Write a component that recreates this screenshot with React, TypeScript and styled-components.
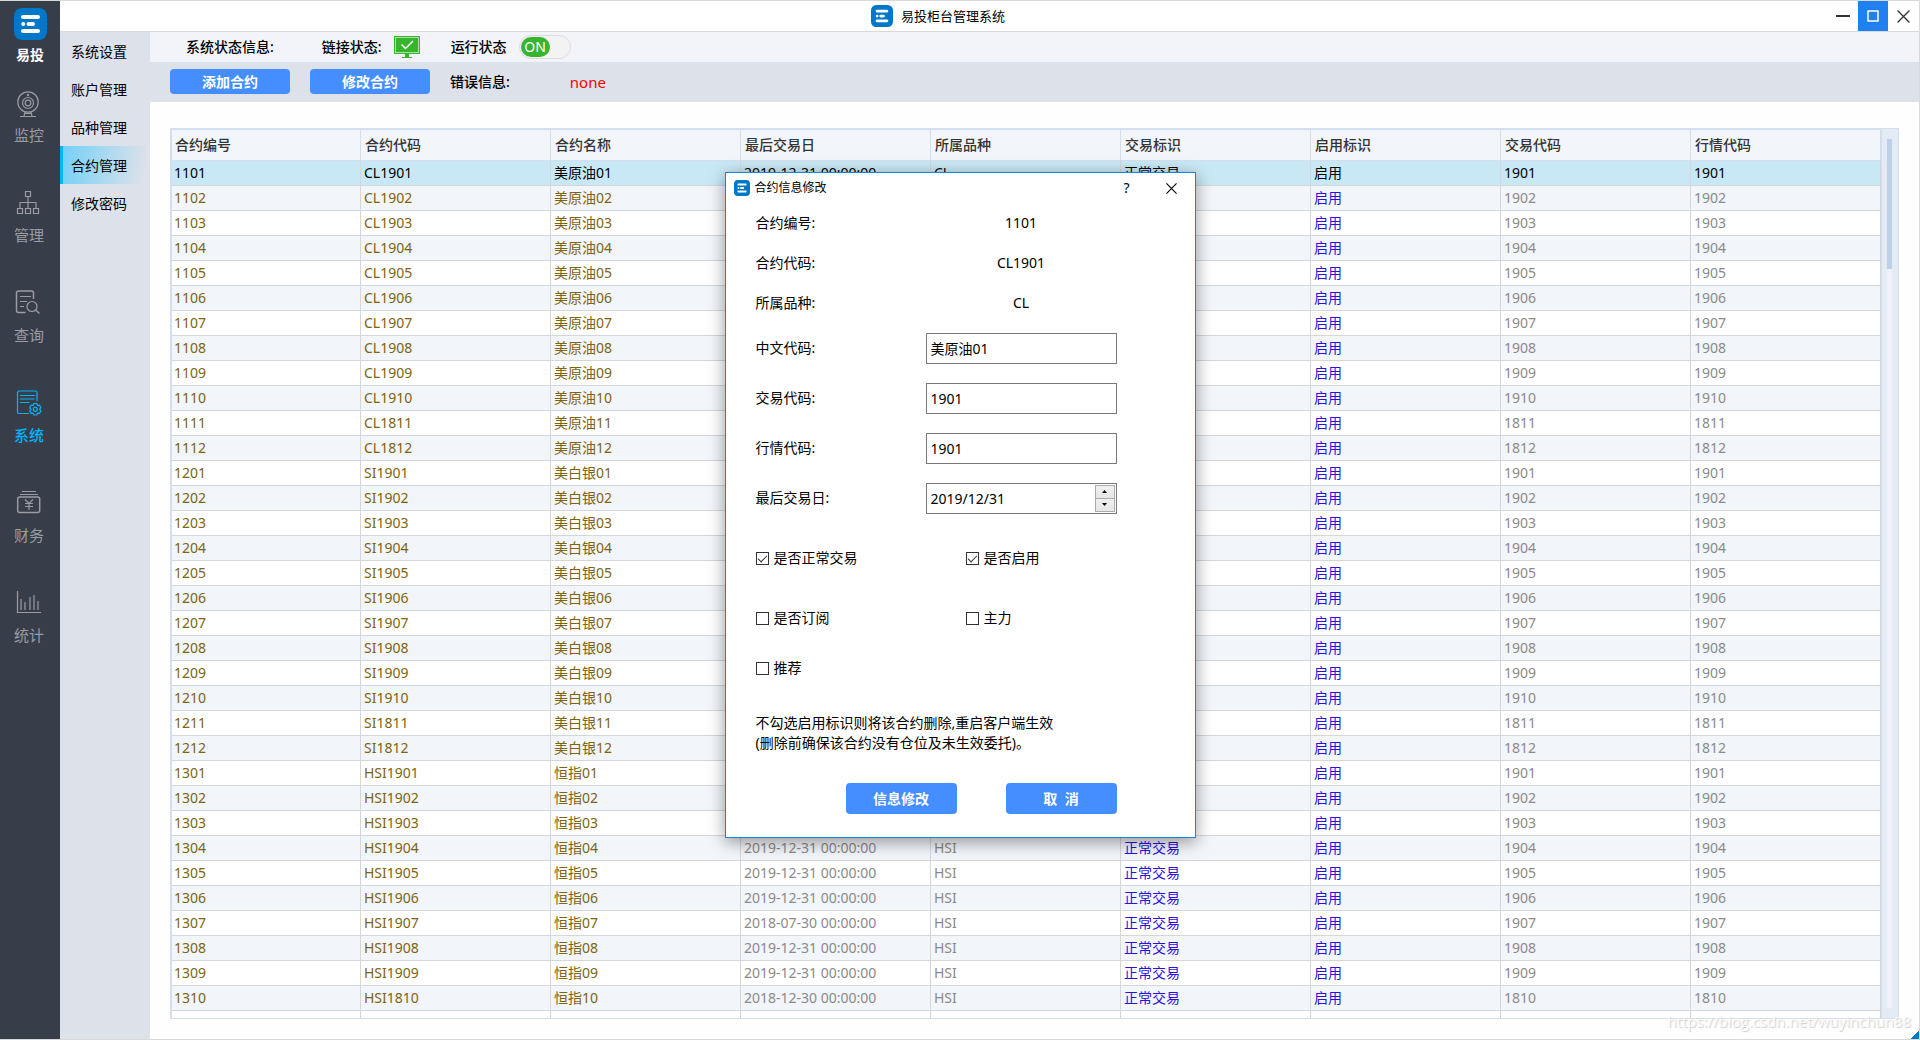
import React, { useState } from "react";
import styled, { createGlobalStyle, css } from "styled-components";

const GlobalStyle = createGlobalStyle`
  * { box-sizing: border-box; }
  body {
    margin: 0;
    background: #fefefe;
    color: #000;
    font: 14px/20px "Noto Sans", "Noto Sans CJK SC", sans-serif;
  }
  button, input { font: inherit; color: inherit; }
  button { padding: 0; border: 0; background: none; cursor: pointer; }
`;

/* ---------- window ---------- */

const Window = styled.div`
  position: relative;
  display: flex;
  height: 100vh;
  border: 1px solid #d9d9d9;
  border-left: 0;
  overflow: hidden;
`;

const Main = styled.div`
  display: flex;
  flex: 1;
  flex-direction: column;
  min-width: 0;
`;

const TitleBar = styled.header`
  display: flex;
  flex: none;
  height: 31px;
  padding-right: 1px;
  border-bottom: 1px solid #d9d9d9;
  background: #fff;
`;

const Title = styled.h1`
  display: flex;
  flex: 1;
  align-items: center;
  justify-content: center;
  gap: 8px;
  margin: 0;
  padding-right: 12px;
  font-size: 13px;
  font-weight: 400;
`;

const WindowButton = styled.button<{ $active?: boolean }>`
  display: flex;
  align-items: center;
  justify-content: center;
  width: 30px;
  color: ${(p) => (p.$active ? "#fff" : "#333")};
  background: ${(p) => (p.$active ? "#2080f0" : "transparent")};
`;

const ResizeGrip = styled.div`
  position: absolute;
  right: 0;
  bottom: 0;
  width: 9px;
  height: 9px;
  background: linear-gradient(135deg, transparent 50%, #0078c8 50%);
`;

const Watermark = styled.div`
  position: absolute;
  right: 8px;
  bottom: 8px;
  color: #fafafa;
  font: 15px/20px "Open Sans", sans-serif;
  text-shadow: 1px 1px 1px #ccc;
`;

/* ---------- navigation ---------- */

const Rail = styled.nav`
  display: flex;
  flex: none;
  flex-direction: column;
  width: 60px;
  background: #383d4a;
`;

const Brand = styled.div`
  display: flex;
  flex-direction: column;
  align-items: center;
  gap: 5px;
  height: 81px;
  padding-top: 7px;
  color: #fff;
  font-weight: 700;
`;

const RailButton = styled.button<{ $active?: boolean }>`
  display: flex;
  flex: none;
  flex-direction: column;
  align-items: center;
  gap: 7px;
  height: 100px;
  padding: 8px 2px 0 0;
  color: ${(p) => (p.$active ? "#00b4ff" : "#9a9ca2")};
  font-size: 15px;
  font-weight: ${(p) => (p.$active ? 500 : 400)};
`;

const Body = styled.div`
  display: flex;
  flex: 1;
  min-height: 0;
`;

const SubNav = styled.nav`
  flex: none;
  width: 90px;
  background: #dde1ea;
`;

const SubNavButton = styled.button<{ $active?: boolean }>`
  display: block;
  width: 100%;
  height: 38px;
  padding: 2px 0 0 8px;
  border-left: 3px solid transparent;
  text-align: left;
  ${(p) =>
    p.$active &&
    css`
      border-left-color: #00b7ff;
      background: linear-gradient(100deg, #74d0f7, #dde1ea 92%);
    `}
`;

/* ---------- status and tools ---------- */

const Content = styled.main`
  display: flex;
  flex: 1;
  flex-direction: column;
  min-width: 0;
`;

const StatusBar = styled.div`
  display: flex;
  flex: none;
  align-items: center;
  gap: 12px;
  height: 30px;
  padding-left: 36px;
  background: #f2f4f9;
`;

const StatusLabel = styled.span<{ $gap?: number }>`
  margin-right: ${(p) => p.$gap ?? 0}px;
  font-weight: 500;
`;

const LinkState = styled.span`
  display: flex;
  margin-right: 19px;
`;

const Toggle = styled.button`
  display: flex;
  width: 52px;
  height: 24px;
  padding: 1px;
  border: 1px solid #ddd;
  border-radius: 12px;
  background: #f3f3f3;
`;

const ToggleKnob = styled.span`
  width: 29px;
  height: 20px;
  border-radius: 10px;
  color: #fff;
  background: #37b52f;
  text-align: center;
`;

const ToolBar = styled.div`
  display: flex;
  flex: none;
  align-items: center;
  gap: 20px;
  height: 40px;
  padding: 0 0 1px 20px;
  background: #dde1ea;
`;

const PrimaryButton = styled.button<{ $size?: "small" | "large" }>`
  width: ${(p) => (p.$size === "large" ? 111 : 120)}px;
  height: ${(p) => (p.$size === "large" ? 31 : 25)}px;
  border-radius: 4px;
  color: #fff;
  background: #458eff;
  font-weight: 700;
  white-space: pre;
`;

const ErrorText = styled.output`
  color: #f00;
  font-size: 15px;
`;

/* ---------- table ---------- */

const TableFrame = styled.section`
  display: flex;
  flex: 1;
  min-height: 0;
  margin: 26px 20px 20px;
  border: 1px solid #d3dfee;
`;

const TableClip = styled.div`
  flex: 1;
  min-width: 0;
  overflow: hidden;
`;

const Table = styled.table`
  width: 100%;
  table-layout: fixed;
  border-spacing: 0;
  border-collapse: separate;
  white-space: nowrap;
`;

const HeadCell = styled.th`
  height: 32px;
  padding: 0 4px;
  border: solid #d3dfee;
  border-width: 1px 1px 1px 0;
  color: #333;
  background: #f2f5fa;
  font-weight: 500;
  text-align: left;
  &:first-child {
    padding-left: 3px;
    border-left-width: 1px;
  }
`;

type Tone = "olive" | "gray" | "blue";
const tones: Record<Tone, string> = { olive: "#7d6410", gray: "#8a8a8a", blue: "#2b10e0" };

const Row = styled.tr<{ $selected?: boolean }>`
  background: ${(p) => (p.$selected ? "#c9e8f5" : "#fff")};
  &:nth-child(even) { background: #f2f5fa; }
  ${(p) => p.$selected && css`td { color: #000; }`}
`;

const Cell = styled.td<{ $tone: Tone }>`
  height: 25px;
  padding: 0 3px;
  border: solid #d5d6d8;
  border-width: 0 1px 1px 0;
  color: ${(p) => tones[p.$tone]};
  &:first-child {
    padding-left: 2px;
    border-left: 1px solid #d3dfee;
  }
`;

const ScrollTrack = styled.div`
  flex: none;
  width: 17px;
  padding: 10px 6px 10px 5px;
  border-left: 1px solid #d3dfee;
  background: #e4ebf4;
`;

const ScrollGroove = styled.div`
  height: 100%;
  background: #eff3f8;
`;

const ScrollThumb = styled.div`
  height: 15%;
  background: #bed0e6;
`;

/* ---------- dialog ---------- */

const Dialog = styled.section`
  position: absolute;
  top: 171px;
  left: calc(50% - 235px);
  width: 471px;
  border: 1px solid #1883d7;
  background: #fff;
  box-shadow: 0 4px 16px rgba(0, 0, 0, 0.4);
`;

const DialogBar = styled.header`
  display: flex;
  align-items: center;
  height: 30px;
  padding: 0 8px;
`;

const DialogTitle = styled.h2`
  flex: 1;
  margin: 0 0 0 5px;
  font-size: 12px;
  font-weight: 400;
`;

const DialogBarButton = styled.button`
  display: flex;
  align-items: center;
  justify-content: center;
  width: 30px;
  height: 28px;
  &:last-child { margin-left: 15px; }
`;

const Form = styled.form`
  padding: 0 78px 23px 30px;
`;

const Field = styled.div<{ $tall?: boolean }>`
  display: flex;
  align-items: center;
  height: ${(p) => (p.$tall ? 50 : 40)}px;
`;

const FieldLabel = styled.label`
  flex: 1;
`;

const FieldValue = styled.output`
  width: 191px;
  text-align: center;
`;

const InputBox = styled.div`
  display: flex;
  width: 191px;
  height: 31px;
  padding: 1px;
  border: 1px solid #7a7a7a;
  background: #fff;
`;

const TextInput = styled.input`
  flex: 1;
  min-width: 0;
  padding: 1px 2px 0 3px;
  border: 0;
  outline: 0;
  background: none;
`;

const Spinner = styled.div`
  display: flex;
  flex-direction: column;
  width: 20px;
`;

const SpinButton = styled.button`
  display: flex;
  flex: 1;
  align-items: center;
  justify-content: center;
  border: 1px solid #acacac;
  background: linear-gradient(#f0f0f0, #e6e6e6);
  & + & { border-top: 0; }
`;

const Checks = styled.div`
  display: grid;
  grid-template: 60px 60px 40px / 210px 1fr;
  align-items: center;
  margin-top: 5px;
`;

const CheckLabel = styled.label`
  display: flex;
  align-items: center;
  gap: 5px;
`;

const CheckBox = styled.input`
  appearance: none;
  width: 13px;
  height: 13px;
  margin: 0;
  border: 1px solid #333;
  background: #fff;
  &:checked::after {
    content: "";
    display: block;
    width: 8px;
    height: 4px;
    margin: 2px 0 0 1px;
    border: solid #333;
    border-width: 0 0 1px 1px;
    transform: rotate(-45deg);
  }
`;

const Note = styled.p`
  margin: 25px 0 30px;
`;

const Actions = styled.div`
  display: flex;
  justify-content: flex-end;
  gap: 49px;
`;

/* ---------- drawings ---------- */

const Logo = ({ width, height }: { width: number; height: number }) => (
  <svg width={width} height={height} viewBox="0 0 33 32" preserveAspectRatio="none" aria-hidden="true">
    <rect width="33" height="32" rx="8" fill="#0077c8" />
    <g stroke="#fff" strokeWidth="4" strokeLinecap="round">
      <path d="M9 9h15M14.500 16h4.500M9 23h15M9.200 16h.1" />
    </g>
  </svg>
);

const Icon = ({ children }: { children: React.ReactNode }) => (
  <svg width="28" height="28" viewBox="0 0 28 28" fill="none" stroke="currentColor" strokeWidth="1.200" aria-hidden="true">
    {children}
  </svg>
);

const icons: Record<string, React.ReactNode> = {
  监控: (
    <Icon>
      <circle cx="13" cy="12" r="10.200" />
      <circle cx="13" cy="13" r="5.500" />
      <circle cx="13" cy="13" r="2.800" />
      <circle cx="13" cy="5" r=".6" />
      <path d="M10 22l-1 4M16 22l1 4M5 26.500h16M9 23.500h8" />
    </Icon>
  ),
  管理: (
    <Icon>
      <path d="M10.500 1.500h5v5h-5zM2.500 18.500h5v5h-5zM10.500 18.500h5v5h-5zM18.500 18.500h5v5h-5zM13 6.500v12M5 18.500v-6h16v6" />
    </Icon>
  ),
  查询: (
    <Icon>
      <path d="M10.500 22.500H3.500a2 2 0 0 1-2-2V3a2 2 0 0 1 2-2h13a2 2 0 0 1 2 2v6" strokeWidth="1.500" />
      <path d="M5 6.500h11M5 11.500h7M5 16.500h4" />
      <circle cx="17" cy="16.500" r="5" />
      <path d="M20.500 20l4 3.500" strokeWidth="1.500" />
    </Icon>
  ),
  系统: (
    <Icon>
      <path d="M14 23.500H4a1.500 1.500 0 0 1-1.500-1.500V2.500A1.500 1.500 0 0 1 4 1h16.500A1.500 1.500 0 0 1 22 2.500V11M5 5.500h14.500M5 9h14.500M5 12.500h9.500" />
      <path d="M18.800 13.500h3l.7 2 2-.3 1.400 2.500-1.300 1.600 1.300 1.600-1.400 2.500-2-.3-.7 1.900h-3l-.7-1.900-2 .3-1.400-2.500 1.300-1.600-1.300-1.600 1.400-2.500 2 .3z" />
      <circle cx="20.300" cy="19.300" r="2" />
    </Icon>
  ),
  财务: (
    <Icon>
      <path d="M7 1.500h14M5 4.500h18" />
      <rect x="2.700" y="7" width="22" height="15.500" rx="2" strokeWidth="1.500" />
      <path d="M10 9.500l4 4 4-4M14 13.500v6.500M10 13.500h8M10 16.500h8" />
    </Icon>
  ),
  统计: (
    <Icon>
      <path d="M2.500 1v21.500H26M6 9v11M10 12v8M15 7v13M19 5v15M23 11v9" />
    </Icon>
  ),
};

const MonitorIcon = () => (
  <svg width="26" height="22" viewBox="0 0 26 22" fill="none" aria-label="已连接">
    <rect x=".5" y=".5" width="25" height="17" fill="#37b52f" stroke="#37b52f" />
    <rect x="1.500" y="1.500" width="23" height="15" stroke="#a7e0a2" />
    <path d="M7.500 8.500l4 4L19 5" stroke="#fff" strokeWidth="1.500" />
    <path d="M11 18h4v3h3v1H8v-1h3z" fill="#37b52f" />
  </svg>
);

const CrossIcon = ({ size }: { size: number }) => (
  <svg width={size} height={size} viewBox="0 0 12 12" stroke="currentColor" strokeWidth="1.200" aria-hidden="true">
    <path d="M.5.5l11 11M11.500.5l-11 11" />
  </svg>
);

/* ---------- data ---------- */

const railItems = ["监控", "管理", "查询", "系统", "财务", "统计"];
const subItems = ["系统设置", "账户管理", "品种管理", "合约管理", "修改密码"];
const columns = ["合约编号", "合约代码", "合约名称", "最后交易日", "所属品种", "交易标识", "启用标识", "交易代码", "行情代码"];
const columnTones: Tone[] = ["olive", "olive", "olive", "gray", "gray", "blue", "blue", "gray", "gray"];

const products = [
  { base: 1100, symbol: "CL", name: "美原油", count: 12, firstOld: 11 },
  { base: 1200, symbol: "SI", name: "美白银", count: 12, firstOld: 11 },
  { base: 1300, symbol: "HSI", name: "恒指", count: 10, firstOld: 10 },
];
const otherDates: Record<number, string> = { 1307: "2018-07-30", 1310: "2018-12-30" };

const contracts = products.flatMap(({ base, symbol, name, count, firstOld }) =>
  Array.from({ length: count }, (_, i) => {
    const month = String(i + 1).padStart(2, "0");
    const code = (i + 1 >= firstOld ? "18" : "19") + month;
    const id = base + i + 1;
    const day = otherDates[id] ?? "2019-12-31";
    return [String(id), symbol + code, name + month, `${day} 00:00:00`, symbol, "正常交易", "启用", code, code];
  })
);

const options = [
  { label: "是否正常交易", checked: true },
  { label: "是否启用", checked: true },
  { label: "是否订阅", checked: false },
  { label: "主力", checked: false },
  { label: "推荐", checked: false },
];

const ContractDialog = () => {
  const [fields, setFields] = useState({ 中文代码: "美原油01", 交易代码: "1901", 行情代码: "1901" });
  const [date, setDate] = useState("2019/12/31");
  return (
    <Dialog role="dialog" aria-labelledby="dialog-title">
      <DialogBar>
        <Logo width={16} height={16} />
        <DialogTitle id="dialog-title">合约信息修改</DialogTitle>
        <DialogBarButton type="button">?</DialogBarButton>
        <DialogBarButton type="button" aria-label="关闭"><CrossIcon size={11} /></DialogBarButton>
      </DialogBar>
      <Form onSubmit={(e) => e.preventDefault()}>
        {[["合约编号", "1101"], ["合约代码", "CL1901"], ["所属品种", "CL"]].map(([label, value]) => (
          <Field key={label}>
            <FieldLabel htmlFor={label}>{label}:</FieldLabel>
            <FieldValue id={label}>{value}</FieldValue>
          </Field>
        ))}
        {Object.entries(fields).map(([label, value]) => (
          <Field key={label} $tall>
            <FieldLabel htmlFor={label}>{label}:</FieldLabel>
            <InputBox>
              <TextInput id={label} value={value} onChange={(e) => setFields({ ...fields, [label]: e.target.value })} />
            </InputBox>
          </Field>
        ))}
        <Field $tall>
          <FieldLabel htmlFor="last-day">最后交易日:</FieldLabel>
          <InputBox>
            <TextInput id="last-day" value={date} onChange={(e) => setDate(e.target.value)} />
            <Spinner>
              <SpinButton type="button" aria-label="增加">
                <svg width="5" height="3" viewBox="0 0 5 3"><path d="M0 3L2.500 0 5 3z" /></svg>
              </SpinButton>
              <SpinButton type="button" aria-label="减少">
                <svg width="5" height="3" viewBox="0 0 5 3"><path d="M0 0l2.500 3L5 0z" /></svg>
              </SpinButton>
            </Spinner>
          </InputBox>
        </Field>
        <Checks>
          {options.map(({ label, checked }) => (
            <CheckLabel key={label}>
              <CheckBox type="checkbox" defaultChecked={checked} />
              {label}
            </CheckLabel>
          ))}
        </Checks>
        <Note>
          不勾选启用标识则将该合约删除,重启客户端生效
          <br />
          (删除前确保该合约没有仓位及未生效委托)。
        </Note>
        <Actions>
          <PrimaryButton $size="large">信息修改</PrimaryButton>
          <PrimaryButton $size="large" type="button">{"取  消"}</PrimaryButton>
        </Actions>
      </Form>
    </Dialog>
  );
};

export default function App() {
  return (
    <>
      <GlobalStyle />
      <Window>
        <Rail>
          <Brand>
            <Logo width={33} height={32} />
            易投
          </Brand>
          {railItems.map((item) => (
            <RailButton key={item} $active={item === "系统"}>
              {icons[item]}
              {item}
            </RailButton>
          ))}
        </Rail>
        <Main>
          <TitleBar>
            <Title>
              <Logo width={22} height={22} />
              易投柜台管理系统
            </Title>
            <WindowButton aria-label="最小化">
              <svg width="14" height="2"><rect width="14" height="2" fill="currentColor" /></svg>
            </WindowButton>
            <WindowButton aria-label="还原" $active>
              <svg width="12" height="12" fill="none" stroke="currentColor">
                <rect x="1" y="1" width="10" height="10" strokeWidth="1.500" />
              </svg>
            </WindowButton>
            <WindowButton aria-label="关闭"><CrossIcon size={13} /></WindowButton>
          </TitleBar>
          <Body>
            <SubNav>
              {subItems.map((item) => (
                <SubNavButton key={item} $active={item === "合约管理"}>{item}</SubNavButton>
              ))}
            </SubNav>
            <Content>
              <StatusBar>
                <StatusLabel $gap={36}>系统状态信息:</StatusLabel>
                <StatusLabel>链接状态:</StatusLabel>
                <LinkState><MonitorIcon /></LinkState>
                <StatusLabel>运行状态</StatusLabel>
                <Toggle role="switch" aria-checked="true"><ToggleKnob>ON</ToggleKnob></Toggle>
              </StatusBar>
              <ToolBar>
                <PrimaryButton>添加合约</PrimaryButton>
                <PrimaryButton>修改合约</PrimaryButton>
                <StatusLabel $gap={40}>错误信息:</StatusLabel>
                <ErrorText>none</ErrorText>
              </ToolBar>
              <TableFrame>
                <TableClip>
                  <Table>
                    <thead>
                      <tr>{columns.map((c) => <HeadCell key={c}>{c}</HeadCell>)}</tr>
                    </thead>
                    <tbody>
                      {contracts.map((cells, i) => (
                        <Row key={cells[0]} $selected={i === 0}>
                          {cells.map((cell, c) => (
                            <Cell key={columns[c]} $tone={columnTones[c]}>{cell}</Cell>
                          ))}
                        </Row>
                      ))}
                      <Row>
                        {columns.map((c) => <Cell key={c} $tone="gray" />)}
                      </Row>
                    </tbody>
                  </Table>
                </TableClip>
                <ScrollTrack>
                  <ScrollGroove><ScrollThumb /></ScrollGroove>
                </ScrollTrack>
              </TableFrame>
            </Content>
          </Body>
        </Main>
        <ContractDialog />
        <Watermark>https://blog.csdn.net/wuyinchun88</Watermark>
        <ResizeGrip />
      </Window>
    </>
  );
}
